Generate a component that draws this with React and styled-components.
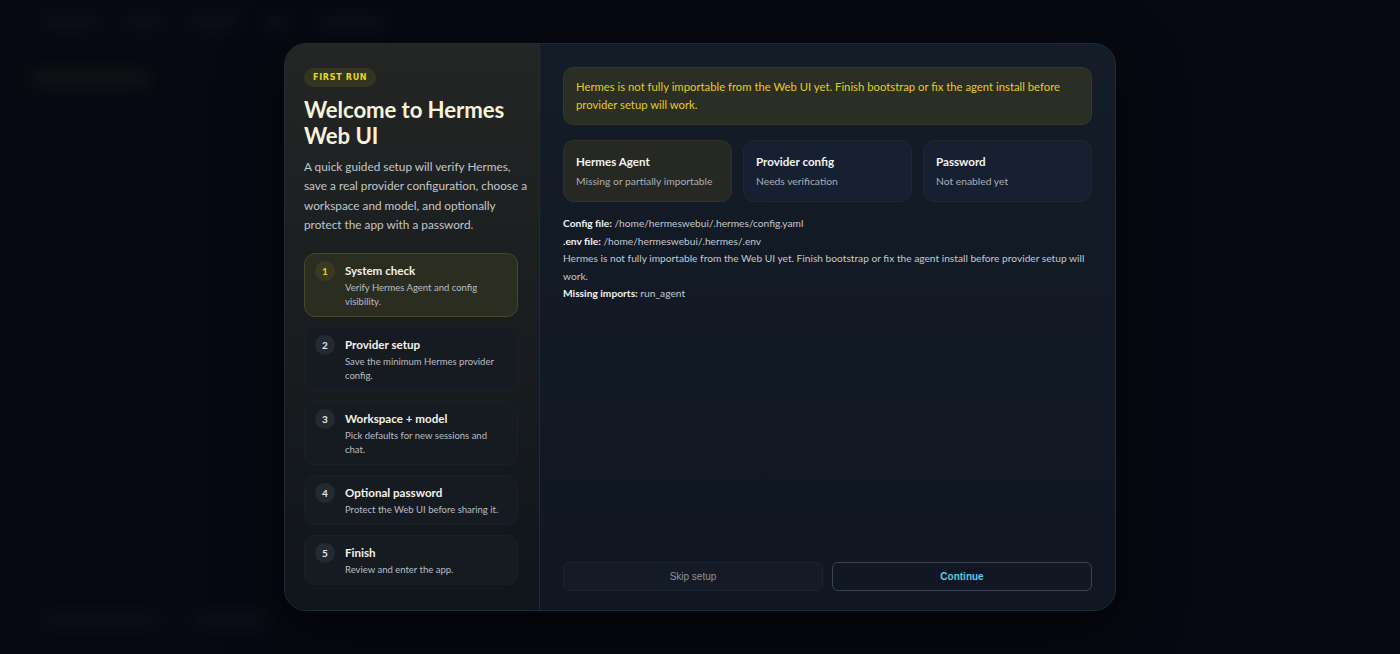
import React from "react";
import styled, { createGlobalStyle } from "styled-components";

const steps = [
    { n: 1, title: "System check", desc: "Verify Hermes Agent and config visibility." },
    { n: 2, title: "Provider setup", desc: "Save the minimum Hermes provider config." },
    { n: 3, title: "Workspace + model", desc: "Pick defaults for new sessions and chat." },
    { n: 4, title: "Optional password", desc: "Protect the Web UI before sharing it." },
    { n: 5, title: "Finish", desc: "Review and enter the app." },
];

const statuses = [
    { title: "Hermes Agent", sub: "Missing or partially importable", warn: true },
    { title: "Provider config", sub: "Needs verification" },
    { title: "Password", sub: "Not enabled yet" },
];

const warning =
    "Hermes is not fully importable from the Web UI yet. Finish bootstrap or fix the agent install before provider setup will work.";

function App() {
    return (
        <>
            <GlobalStyle />
            <Page>
                {/* blurred app behind the dialog */}
                <Backdrop aria-hidden>
                    <TopBar>
                        <Blob w={60} />
                        <Blob w={40} />
                        <Blob w={50} />
                        <Blob w={30} />
                        <Blob w={70} />
                    </TopBar>
                    <Glow />
                    <BottomBar>
                        <Blob w={120} />
                        <Blob w={80} />
                    </BottomBar>
                </Backdrop>

                <Overlay>
                    <Modal>
                        <Side>
                            <Badge>FIRST RUN</Badge>
                            <Title>Welcome to Hermes Web UI</Title>
                            <Intro>
                                A quick guided setup will verify Hermes,
                                <br />
                                save a real provider configuration, choose a
                                workspace and model, and optionally protect the
                                app with a password.
                            </Intro>
                            <StepList>
                                {steps.map((s) => (
                                    <Step key={s.n} active={s.n === 1}>
                                        <StepNum active={s.n === 1}>{s.n}</StepNum>
                                        <StepText>
                                            <StepTitle>{s.title}</StepTitle>
                                            <StepDesc>{s.desc}</StepDesc>
                                        </StepText>
                                    </Step>
                                ))}
                            </StepList>
                        </Side>

                        <Main>
                            <Alert>{warning}</Alert>
                            <StatusGrid>
                                {statuses.map((s) => (
                                    <Status key={s.title} warn={s.warn}>
                                        <StatusTitle>{s.title}</StatusTitle>
                                        <StatusSub>{s.sub}</StatusSub>
                                    </Status>
                                ))}
                            </StatusGrid>
                            <Info>
                                <div>
                                    <b>Config file:</b> /home/hermeswebui/.hermes/config.yaml
                                </div>
                                <div>
                                    <b>.env file:</b> /home/hermeswebui/.hermes/.env
                                </div>
                                <div>{warning}</div>
                                <div>
                                    <b>Missing imports:</b> run_agent
                                </div>
                            </Info>
                            <Actions>
                                <Button>Skip setup</Button>
                                <Button primary>Continue</Button>
                            </Actions>
                        </Main>
                    </Modal>
                </Overlay>
            </Page>
        </>
    );
}

const GlobalStyle = createGlobalStyle`
    html, body {
        margin: 0;
        padding: 0;
        background: #080b14;
        font-family: Lato, "Open Sans", sans-serif;
    }
    * { box-sizing: border-box; }
`;

const Page = styled.div`
    position: relative;
    width: 1400px;
    height: 654px;
    overflow: hidden;
    background: #090c16;
`;

const Backdrop = styled.div`
    height: 100%;
    display: flex;
    flex-direction: column;
    justify-content: space-between;
    filter: blur(8px);
    opacity: 0.5;
`;

const TopBar = styled.div`
    display: flex;
    gap: 24px;
    padding: 16px 40px;
`;

const BottomBar = styled.div`
    display: flex;
    gap: 30px;
    padding: 0 40px 28px;
`;

const Blob = styled.div`
    width: ${(p) => p.w}px;
    height: 12px;
    border-radius: 6px;
    background: #1c2230;
`;

const Glow = styled.div`
    width: 120px;
    height: 16px;
    margin: 0 0 0 30px;
    border-radius: 8px;
    background: #2a2a1a;
    align-self: flex-start;
    transform: translateY(-250px);
`;

const Overlay = styled.div`
    position: absolute;
    inset: 0;
    display: flex;
    align-items: center;
    justify-content: center;
    background: rgba(5, 7, 12, 0.35);
`;

const Modal = styled.div`
    width: 832px;
    height: 568px;
    display: flex;
    border-radius: 22px;
    border: 1px solid #222a36;
    overflow: hidden;
    background: #121a26;
    box-shadow: 0 20px 60px rgba(0, 0, 0, 0.6);
`;

const Side = styled.div`
    width: 255px;
    flex-shrink: 0;
    padding: 24px 19px 0 19px;
    border-right: 1px solid #232a33;
    background: linear-gradient(180deg, #232624 0%, #1a1e20 45%, #10151c 100%);
    display: flex;
    flex-direction: column;
    align-items: flex-start;
`;

const Badge = styled.div`
    font-family: "DejaVu Sans", sans-serif;
    font-size: 8px;
    line-height: 9px;
    font-weight: 700;
    letter-spacing: 0.7px;
    color: #e9d51a;
    background: #34351f;
    border-radius: 10px;
    padding: 5px 9px 5px;
    height: 19px;
`;

const Title = styled.h1`
    margin: 10px 0 0;
    font-size: 22.2px;
    line-height: 26px;
    font-weight: 700;
    color: #f6f2dc;
    letter-spacing: -0.1px;
`;

const Intro = styled.p`
    margin: 8px 0 0;
    font-size: 11.8px;
    line-height: 19.3px;
    color: #c3c6c9;
    width: 226px;
    margin-right: -10px;
`;

const StepList = styled.div`
    margin-top: 19px;
    width: 214px;
    display: flex;
    flex-direction: column;
    gap: 10px;
`;

const Step = styled.div`
    display: flex;
    gap: 10px;
    padding: 9px 12px 7px 10px;
    border-radius: 11px;
    background: ${(p) => (p.active ? "#2b2d21" : "#161b22")};
    border: 1px solid ${(p) => (p.active ? "#47482a" : "#1b2028")};
`;

const StepNum = styled.div`
    width: 20px;
    height: 20px;
    margin-top: -2px;
    flex-shrink: 0;
    border-radius: 50%;
    display: flex;
    align-items: center;
    justify-content: center;
    font-size: 10px;
    font-weight: 700;
    color: ${(p) => (p.active ? "#e6d21c" : "#e4e6e8")};
    background: ${(p) => (p.active ? "#3a3a22" : "#242a32")};
`;

const StepText = styled.div`
    display: flex;
    flex-direction: column;
`;

const StepTitle = styled.div`
    font-size: 11.6px;
    font-weight: 700;
    line-height: 16px;
    color: #f4f2e6;
`;

const StepDesc = styled.div`
    margin-top: 2px;
    font-size: 9.5px;
    line-height: 14px;
    color: #b9bdc2;
`;

const Main = styled.div`
    flex: 1;
    padding: 23px 23px 19px;
    display: flex;
    flex-direction: column;
    background: linear-gradient(180deg, #141c28 0%, #101722 100%);
`;

const Alert = styled.div`
    padding: 10px 12px 10px;
    border-radius: 10px;
    background: #2b2e25;
    border: 1px solid #363829;
    color: #e1cd22;
    font-size: 11.3px;
    line-height: 18px;
`;

const StatusGrid = styled.div`
    margin-top: 15px;
    display: grid;
    grid-template-columns: repeat(3, 1fr);
    gap: 11px;
`;

const Status = styled.div`
    height: 62px;
    padding: 13px 12px 12px;
    border-radius: 11px;
    background: ${(p) => (p.warn ? "#262923" : "#172030")};
    border: 1px solid ${(p) => (p.warn ? "#30322a" : "#1d2736")};
`;

const StatusTitle = styled.div`
    font-size: 11.6px;
    font-weight: 700;
    line-height: 16px;
    color: #f3f3f0;
`;

const StatusSub = styled.div`
    margin-top: 4px;
    font-size: 10.3px;
    line-height: 15px;
    color: #a9aeb5;
    white-space: nowrap;
`;

const Info = styled.div`
    margin-top: 13px;
    font-size: 10.2px;
    line-height: 17.5px;
    color: #c4c8ce;

    b {
        color: #f1f2f3;
        font-weight: 700;
    }
`;

const Actions = styled.div`
    margin-top: auto;
    display: grid;
    grid-template-columns: 1fr 1fr;
    gap: 9px;
`;

const Button = styled.button`
    height: 29px;
    border-radius: 6px;
    font-family: "Liberation Sans", Arial, sans-serif;
    font-size: 10px;
    font-weight: ${(p) => (p.primary ? 700 : 400)};
    color: ${(p) => (p.primary ? "#5fc7e4" : "#8b9199")};
    background: ${(p) => (p.primary ? "#111723" : "#151b26")};
    border: 1px solid ${(p) => (p.primary ? "#3a4352" : "#1c2330")};
    cursor: pointer;
`;

export default App;
